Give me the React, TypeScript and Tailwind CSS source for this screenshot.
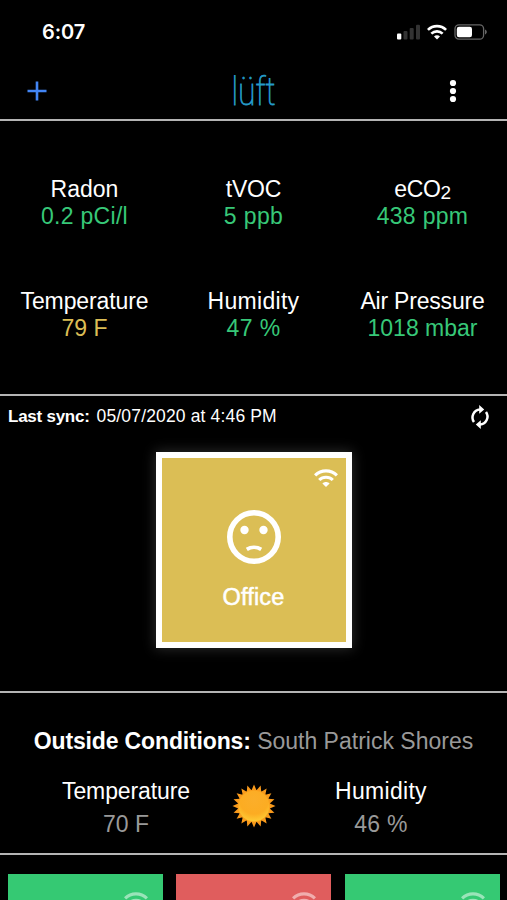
import React from "react";

const METRICS = [
  { label: "Radon", value: "0.2 pCi/l", color: "text-[#37c878]", labelSpacing: "tracking-[0px]", valueSpacing: "tracking-[0.3px]" },
  { label: "tVOC", value: "5 ppb", color: "text-[#37c878]", labelSpacing: "tracking-[-0.2px]", valueSpacing: "tracking-[0.4px]" },
  { label: "eCO", sub: "2", value: "438 ppm", color: "text-[#37c878]", labelSpacing: "tracking-[-0.4px]", valueSpacing: "tracking-[0.3px]" },
  { label: "Temperature", value: "79 F", color: "text-[#dbbd55]", labelSpacing: "tracking-[-0.1px]", valueSpacing: "tracking-[0px]" },
  { label: "Humidity", value: "47 %", color: "text-[#37c878]", labelSpacing: "tracking-[0.3px]", valueSpacing: "tracking-[0.4px]" },
  { label: "Air Pressure", value: "1018 mbar", color: "text-[#37c878]", labelSpacing: "tracking-[-0.2px]", valueSpacing: "tracking-[0px]" },
];

// Small tiles at the bottom, one per room
const ROOMS = ["bg-[#35c973]", "bg-[#e05d5d]", "bg-[#35c973]"];

const SUN_POINTS = Array.from({ length: 40 }, (_, i) => {
  const r = i % 2 === 0 ? 21.5 : 16;
  const a = (i * Math.PI) / 20 - Math.PI / 2;
  return `${(22 + r * Math.cos(a)).toFixed(2)},${(22 + r * Math.sin(a)).toFixed(2)}`;
}).join(" ");

function WifiIcon({ className }: { className?: string }) {
  return (
    <svg viewBox="0 0 24 18" fill="none" stroke="currentColor" strokeWidth="3.1" className={className}>
      <path d="M1.1 6.4C7.2.4 16.8.4 22.9 6.4" />
      <path d="M5.2 11C9 7.3 15 7.3 18.8 11" />
      <path d="M8.4 14.4c2-2 5.2-2 7.2 0L12 18z" fill="currentColor" stroke="none" />
    </svg>
  );
}

function StatusBar() {
  return (
    <div className="flex h-[62px] items-start justify-between pr-[19px] pl-[42px]">
      <span className="mt-[20px] font-[Inter] text-[20px] leading-6 font-semibold tracking-[-0.1px]">6:07</span>
      <div className="mt-[23px] flex items-start">
        <svg width="24" height="17" viewBox="0 0 24 17" className="mt-[1px]">
          <rect x="0" y="9.5" width="4.3" height="6" rx="1" fill="#fff" />
          <rect x="6.5" y="7" width="4" height="8.5" rx="1" fill="#333" />
          <rect x="12.7" y="4" width="4" height="11.5" rx="1" fill="#333" />
          <rect x="19" y="0.7" width="4" height="14.8" rx="1" fill="#333" />
        </svg>
        <WifiIcon className="mt-[0.5px] ml-[6px] h-[16px] w-5" />
        <svg width="34" height="18" viewBox="0 0 34 18" className="ml-[7px]">
          <rect x="1" y="1.8" width="28.6" height="14.4" rx="4" fill="none" stroke="#666" strokeWidth="1.3" />
          <rect x="2.8" y="3.8" width="15.2" height="10.4" rx="2.2" fill="#fff" />
          <path d="M31 6.6c2.4.8 2.4 4 0 4.8z" fill="#666" />
        </svg>
      </div>
    </div>
  );
}

function Header() {
  return (
    <header className="grid h-[57px] grid-cols-3 items-center">
      <svg width="20" height="20" viewBox="0 0 20 20" className="ml-[27px]" stroke="#4285f4" strokeWidth="2.6">
        <path d="M10 .5v19M.5 10h19" />
      </svg>
      <span className="mt-[2px] scale-x-[0.84] text-center font-[Roboto] text-[38px] leading-[44px] font-thin text-[#259bc8] [-webkit-text-stroke:0.8px_#259bc8]">
        lüft
      </span>
      <svg width="8" height="24" viewBox="0 0 8 24" className="mr-[50px] justify-self-end" fill="#fff">
        <circle cx="4" cy="4" r="3.1" />
        <circle cx="4" cy="12" r="3.1" />
        <circle cx="4" cy="20" r="3.1" />
      </svg>
    </header>
  );
}

export default function App() {
  return (
    <div className="h-[900px] w-[507px] overflow-hidden bg-black font-['Liberation_Sans',sans-serif] text-white">
      <div className="h-[121px] border-b-2 border-[#b4b4b4]">
        <StatusBar />
        <Header />
      </div>

      <section className="grid h-[275px] grid-cols-3 content-start gap-y-[58px] border-b-2 border-[#b4b4b4] pt-[55px] text-center text-[23px] leading-[27px]">
        {METRICS.map((m) => (
          <div key={m.label} className="h-[54px] whitespace-nowrap">
            <div className={`h-[27px] ${m.labelSpacing}`}>
              {m.label}
              {m.sub && <sub className="bottom-[-2px] text-[19px] leading-none">{m.sub}</sub>}
            </div>
            <div className={`${m.color} ${m.valueSpacing}`}>{m.value}</div>
          </div>
        ))}
      </section>

      <section className="h-[297px] border-b-2 border-[#b4b4b4]">
        <div className="flex h-[42px] items-center justify-between pr-[15px] pl-[8px] text-[17px] whitespace-nowrap">
          <p className="pb-[2px]">
            <span className="mr-[7px] font-bold tracking-[-0.25px]">Last sync:</span>
            <span className="text-[17.5px] tracking-[0.15px]">05/07/2020 at 4:46 PM</span>
          </p>
          <svg width="24" height="24" viewBox="0 0 24 24" fill="none" stroke="#fff" strokeWidth="2.5">
            <path d="M6 17A8 8 0 0 1 12 4.4" />
            <path d="M18 7A8 8 0 0 1 12 19.6" />
            <path d="M11.2 0v8.8l5-4.4zM12.8 15.2V24l-5-4.4z" fill="#fff" stroke="none" />
          </svg>
        </div>
        <div className="mx-auto mt-[14px] flex h-[196px] w-[196px] flex-col items-center border-[6px] border-white bg-[#dbbe55] shadow-[0_0_12px_1px_rgba(255,255,255,0.17)]">
          <WifiIcon className="mt-[11px] mr-[8px] h-[18px] w-6 self-end" />
          <svg width="54" height="54" viewBox="0 0 54 54" fill="none" className="mt-[23px]">
            <circle cx="27" cy="27" r="24.2" stroke="#fff" strokeWidth="5.6" />
            <circle cx="17.5" cy="20" r="4.2" fill="#fff" />
            <circle cx="36.5" cy="20" r="4.2" fill="#fff" />
            <path d="M19.8 39.3c4.2-2.5 10.2-2.5 14.4 0" stroke="#fff" strokeWidth="3.8" />
          </svg>
          <div className="mt-[19px] text-[23.5px] leading-7 tracking-[0.2px] [-webkit-text-stroke:0.5px_white]">Office</div>
        </div>
      </section>

      <section className="h-[162px] border-b-2 border-[#b4b4b4] pt-[32px] whitespace-nowrap">
        <h2 className="text-center text-[23px] leading-8">
          <span className="font-bold tracking-[-0.15px]">Outside Conditions:</span>{" "}
          <span className="text-[#999]">South Patrick Shores</span>
        </h2>
        <div className="flex justify-center pt-[18px] text-center text-[23px] leading-[33px]">
          <div className="w-[214px] pl-[3px]">
            <div className="tracking-[-0.1px]">Temperature</div>
            <div className="text-[#999]">70 F</div>
          </div>
          <svg width="44" height="44" viewBox="0 0 44 44" className="mt-[9px] shrink-0">
            <defs>
              <radialGradient id="sunFace" cx="0.5" cy="0.3" r="0.75">
                <stop offset="0" stopColor="#fbae2a" />
                <stop offset="0.6" stopColor="#fcac22" />
                <stop offset="1" stopColor="#ffd43a" />
              </radialGradient>
            </defs>
            <polygon points={SUN_POINTS} fill="#f99a1c" />
            <circle cx="22" cy="22" r="16" fill="url(#sunFace)" stroke="#f79a1b" strokeWidth="0.8" />
          </svg>
          <div className="w-[214px] pr-[3px]">
            <div className="tracking-[0.3px]">Humidity</div>
            <div className="tracking-[0.3px] text-[#999]">46 %</div>
          </div>
        </div>
      </section>

      <div className="grid grid-cols-3 gap-[13.5px] px-[7.5px] pt-[19px]">
        {ROOMS.map((bg, i) => (
          <div key={i} className={`flex h-[155px] justify-end pt-[18px] pr-[15px] ${bg}`}>
            <WifiIcon className="h-[18px] w-6 text-white/50" />
          </div>
        ))}
      </div>
    </div>
  );
}
